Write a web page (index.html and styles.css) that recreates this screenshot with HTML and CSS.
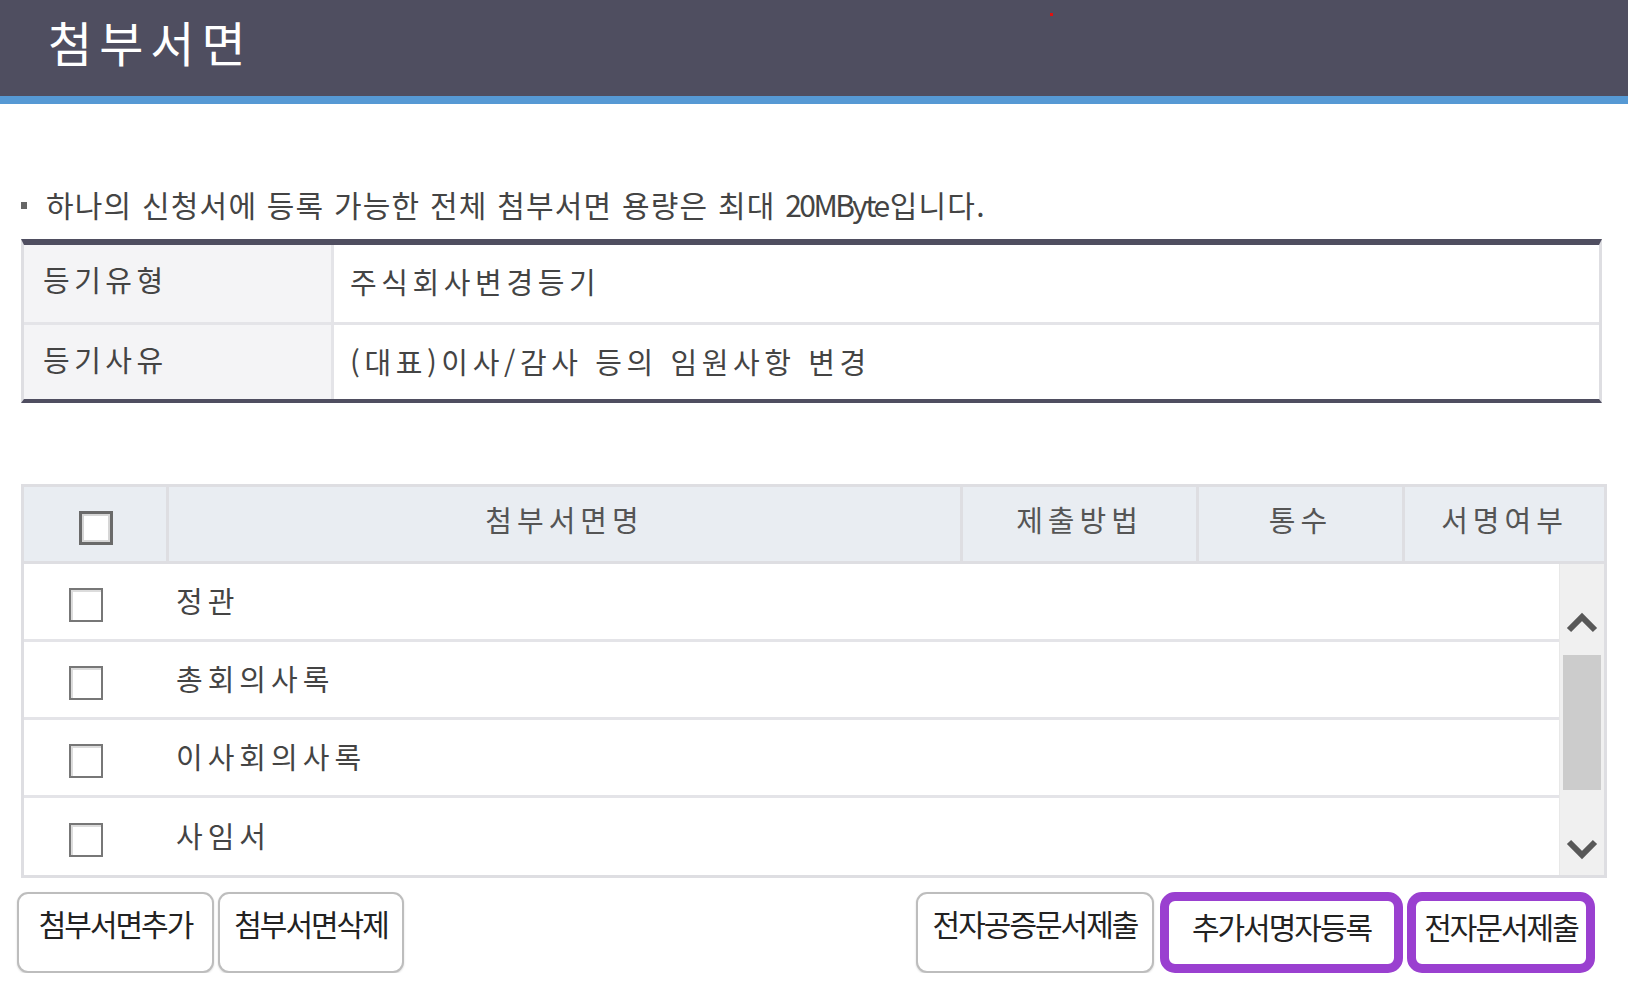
FILE: index.html
```html
<!DOCTYPE html>
<html lang="ko">
<head>
<meta charset="utf-8">
<title>첨부서면</title>
<link rel="stylesheet" href="styles.css">
</head>
<body>
<header class="title-bar">
  <h1 class="title">첨부서면</h1>
  <span class="red-dot"></span>
</header>
<main class="content">
  <p class="notice"><span class="bullet"></span>하나의 신청서에 등록 가능한 전체 첨부서면 용량은 최대&nbsp;<span class="mb">20MByte</span>입니다.</p>

  <div class="info">
    <div class="info-row">
      <div class="info-label">등기유형</div>
      <div class="info-value">주식회사변경등기</div>
    </div>
    <div class="info-row">
      <div class="info-label">등기사유</div>
      <div class="info-value">(대표)이사/감사 등의 임원사항 변경</div>
    </div>
  </div>

  <div class="grid">
    <div class="grid-head">
      <div class="hcell c-check"><span class="chk chk-head"></span></div>
      <div class="hcell c-name">첨부서면명</div>
      <div class="hcell c-method">제출방법</div>
      <div class="hcell c-count">통수</div>
      <div class="hcell c-sign">서명여부</div>
    </div>
    <div class="grid-body">
      <div class="rows">
        <div class="row"><div class="c-check"><span class="chk"></span></div><div class="row-name">정관</div></div>
        <div class="row"><div class="c-check"><span class="chk"></span></div><div class="row-name">총회의사록</div></div>
        <div class="row"><div class="c-check"><span class="chk"></span></div><div class="row-name">이사회의사록</div></div>
        <div class="row last"><div class="c-check"><span class="chk"></span></div><div class="row-name">사임서</div></div>
      </div>
      <div class="scrollbar">
        <svg class="arrow up" width="34" height="24" viewBox="0 0 34 24"><polyline points="4,20 17,7 30,20" fill="none" stroke="#585858" stroke-width="6"/></svg>
        <div class="thumb"></div>
        <svg class="arrow down" width="34" height="24" viewBox="0 0 34 24"><polyline points="4,4 17,17 30,4" fill="none" stroke="#585858" stroke-width="6"/></svg>
      </div>
    </div>
  </div>

  <div class="buttons">
    <div class="btn-group">
      <button class="btn w-add">첨부서면추가</button>
      <button class="btn w-del">첨부서면삭제</button>
    </div>
    <div class="btn-group">
      <button class="btn w-notary">전자공증문서제출</button>
      <button class="btn btn-focus w-signer">추가서명자등록</button>
      <button class="btn btn-focus w-submit">전자문서제출</button>
    </div>
  </div>
</main>
</body>
</html>
```

FILE: styles.css
```css
* { box-sizing: border-box; }
html, body { margin: 0; padding: 0; background: #fff; }
body {
  width: 1628px;
  font-family: "Noto Sans CJK KR", "Noto Sans", sans-serif;
  color: #333;
}

.title-bar {
  position: relative;
  height: 104px;
  background: #4f4e60;
  border-bottom: 8px solid #5699d4;
  padding-left: 48px;
  display: flex;
  align-items: flex-start;
}
.title {
  margin: 6px 0 0;
  font-size: 48px;
  font-weight: 400;
  line-height: 70px;
  color: #fff;
  letter-spacing: 7px;
}
.red-dot {
  position: absolute;
  left: 1050px;
  top: 13px;
  width: 3px;
  height: 3px;
  background: #e01010;
}

.content { padding: 0 21px; }

.notice {
  margin: 82px 0 0;
  height: 36px;
  font-size: 30px;
  line-height: 36px;
  letter-spacing: 1.2px;
  color: #444;
  display: flex;
  align-items: center;
  white-space: pre;
}
.notice .bullet {
  display: inline-block;
  width: 6px;
  height: 7px;
  background: #666;
  margin: 2px 19px 0 0;
}
.notice .mb { letter-spacing: -2.5px; margin-right: 2px; }

.info {
  margin-top: 17px;
  margin-right: 5px;
  border-top: 6px solid #4f4e60;
  border-bottom: 4px solid #4f4e60;
  border-left: 3px solid #dedee2;
  border-right: 3px solid #dedee2;
}
.info-row {
  display: flex;
  height: 77px;
}
.info-row + .info-row { border-top: 3px solid #e4e4e8; }
.info-label {
  width: 310px;
  background: #f4f4f6;
  border-right: 3px solid #e4e4e8;
  padding-left: 19px;
  font-size: 29px;
  line-height: 68px;
  letter-spacing: 4.5px;
  color: #444;
}
.info-value {
  flex: 1;
  padding-left: 16px;
  font-size: 29px;
  line-height: 72px;
  letter-spacing: 4.6px;
  color: #444;
}

.grid {
  margin-top: 81px;
  border: 3px solid #dedee2;
  border-right-width: 0;
}
.grid-head {
  display: flex;
  height: 77px;
  background: #e9edf2;
  border-bottom: 3px solid #dedee2;
}
.hcell {
  display: flex;
  align-items: center;
  justify-content: center;
  font-size: 29px;
  letter-spacing: 5px;
  color: #555;
  padding-bottom: 10px;
}
.hcell + .hcell { border-left: 3px solid #dedee2; }
.c-check { width: 142px; flex: none; display: flex; align-items: center; justify-content: center; }
.c-name { width: 794px; }
.c-method { width: 236px; }
.c-count { width: 206px; }
.c-sign { flex: 1; border-right: 3px solid #dedee2; }

.chk {
  display: block;
  width: 34px;
  height: 34px;
  border: 2px solid #777;
  box-shadow: inset 2px 2px 0 #dcdcdc;
  background: #fff;
}
.chk-head {
  border: 3px solid #6a6a6a;
  box-shadow: inset 0 0 0 2px #d6d6d6;
  margin-left: 2px;
  margin-top: 8px;
}
.grid-head .c-check { padding: 0; }

.grid-body {
  display: flex;
  height: 311px;
}
.rows { flex: 1; }
.row {
  display: flex;
  align-items: center;
  height: 78px;
  border-bottom: 3px solid #e4e4e8;
}
.row.last { border-bottom: 0; height: 77px; }
.row .c-check { width: 124px; padding-top: 6px; }
.row-name {
  padding-left: 28px;
  font-size: 29px;
  letter-spacing: 5px;
  color: #444;
  padding-bottom: 4px;
}

.scrollbar {
  width: 48px;
  background: #f0f0f0;
  border-left: 1px solid #e8e8e8;
  border-right: 3px solid #dedee2;
  display: flex;
  flex-direction: column;
  align-items: center;
}
.arrow.up { margin-top: 46px; }
.thumb {
  width: 38px;
  height: 135px;
  background: #cccccc;
  margin-top: 21px;
}
.arrow.down { margin-top: 48px; }

.buttons {
  display: flex;
  justify-content: space-between;
  margin: 14px 12px 0 -4px;
}
.btn-group { display: flex; gap: 4px; }
.btn {
  height: 81px;
  font-family: "Noto Sans CJK KR", "Noto Sans", sans-serif;
  font-size: 30px;
  letter-spacing: -2px;
  color: #222;
  background: #fff;
  border: 2px solid #bdbdbd;
  border-radius: 11px;
  box-shadow: 0 1px 2px rgba(0,0,0,0.15);
  padding: 0 0 20px;
  line-height: 40px;
  white-space: nowrap;
}
.btn-focus {
  border: 9px solid #9a40d0;
  border-radius: 15px;
  box-shadow: none;
  padding-bottom: 14px;
}
.w-add { width: 197px; }
.w-del { width: 186px; }
.w-notary { width: 238px; margin-right: 2px; }
.w-signer { width: 243px; }
.w-submit { width: 188px; }
```
